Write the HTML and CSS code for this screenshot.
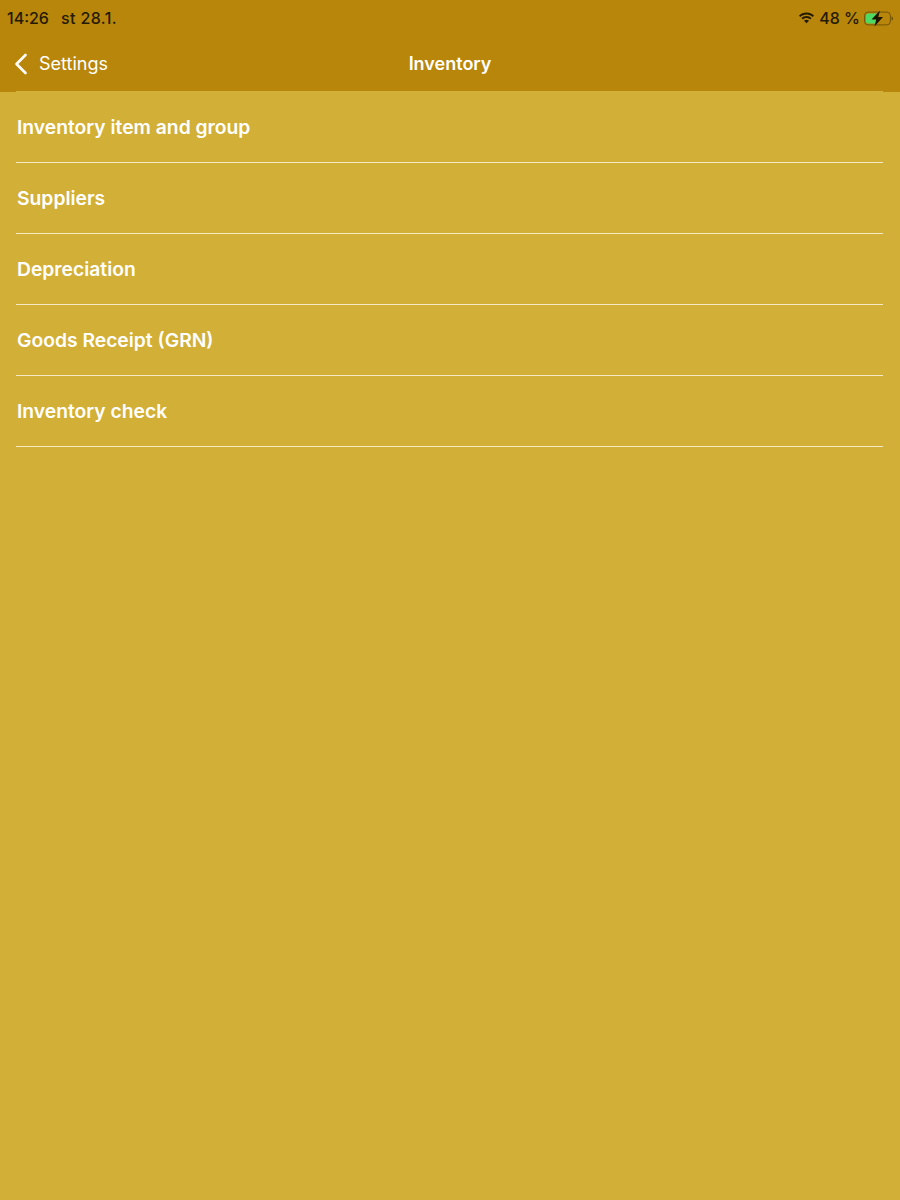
FILE: index.html
```html
<!DOCTYPE html>
<html>
<head>
<meta charset="utf-8">
<title>Inventory</title>
<link rel="stylesheet" href="styles.css">
</head>
<body>

<div class="header">
  <div class="status-bar">
    <div class="status-left"><span>14:26</span><span class="date">st 28.1.</span></div>
    <div class="status-right">
      <svg class="wifi" width="17" height="12" viewBox="0 0 17 12">
        <path d="M8.500 2.400c2.400 0 4.600.9 6.300 2.500l1.200-1.300C14 1.700 11.400.6 8.500.6S3 1.700 1 3.600l1.200 1.300C3.900 3.300 6.100 2.400 8.500 2.400z" fill="#241a00"/>
        <path d="M8.500 5.900c1.400 0 2.700.5 3.700 1.500l1.300-1.300C12.200 4.800 10.400 4.100 8.500 4.100S4.800 4.800 3.500 6.100l1.300 1.300c1-1 2.300-1.500 3.700-1.500z" fill="#241a00"/>
        <path d="M8.500 11.300l2.500-2.600c-.7-.6-1.600-1-2.500-1s-1.800.4-2.500 1z" fill="#241a00"/>
      </svg>
      <span>48 %</span>
      <svg class="battery" width="30" height="17" viewBox="0 0 30 17">
        <rect x="0.600" y="2.100" width="25.800" height="12.800" rx="3.500" fill="none" stroke="#241a00" stroke-opacity="0.45" stroke-width="1"/>
        <rect x="2" y="3.500" width="12" height="10" rx="2" fill="#4cd964"/>
        <path d="M27.500 6.500c1 .3 1.500 1 1.500 2s-.5 1.700-1.500 2z" fill="#241a00" fill-opacity="0.5"/>
        <path d="M16 0.500L7.500 9.500h4.700l-1.700 7 8.500-9.500h-4.700z" fill="#1c1400"/>
      </svg>
    </div>
  </div>
  <div class="nav-bar">
    <div class="back">
      <svg width="14" height="22" viewBox="0 0 14 22">
        <path d="M11.500 2L2.500 11l9 9" fill="none" stroke="#fff" stroke-width="2.600" stroke-linecap="round" stroke-linejoin="round"/>
      </svg>
      <span>Settings</span>
    </div>
    <div class="nav-title">Inventory</div>
  </div>
</div>

<div class="menu">
  <div class="menu-item">Inventory item and group</div>
  <div class="menu-item">Suppliers</div>
  <div class="menu-item">Depreciation</div>
  <div class="menu-item">Goods Receipt (GRN)</div>
  <div class="menu-item">Inventory check</div>
</div>

</body>
</html>
```

FILE: styles.css
```css
html, body {
  margin: 0;
  height: 100%;
}

body {
  background-color: #d2af36;
  font-family: Inter, "Liberation Sans", sans-serif;
  color: #fff;
}

.header {
  background-color: #b8860b;
  height: 92px;
}

.status-bar {
  display: flex;
  justify-content: space-between;
  align-items: center;
  height: 36px;
  padding: 0 6px 0 7px;
  color: #241a00;
  font-size: 16px;
  font-weight: 500;
}

.status-left {
  display: flex;
  gap: 12px;
}

.date {
  letter-spacing: 0.4px;
}

.status-right {
  display: flex;
  align-items: center;
  gap: 4px;
}

.nav-bar {
  display: flex;
  align-items: center;
  justify-content: center;
  position: relative;
  height: 55px;
}

.back {
  position: absolute;
  left: 14px;
  top: 0;
  bottom: 0;
  display: flex;
  align-items: center;
  gap: 11px;
  font-size: 18px;
}

.nav-title {
  font-size: 18px;
  font-weight: 600;
}

.menu {
  margin-top: -1px;
  padding: 0 17px 0 16px;
}

.menu-item {
  height: 70px;
  line-height: 70px;
  border-bottom: 1px solid #f3e9c4;
  padding-left: 1px;
  font-size: 19.3px;
  font-weight: 600;
}

.menu-item:first-child {
  border-top: 1px solid #d3b13c;
}
```
